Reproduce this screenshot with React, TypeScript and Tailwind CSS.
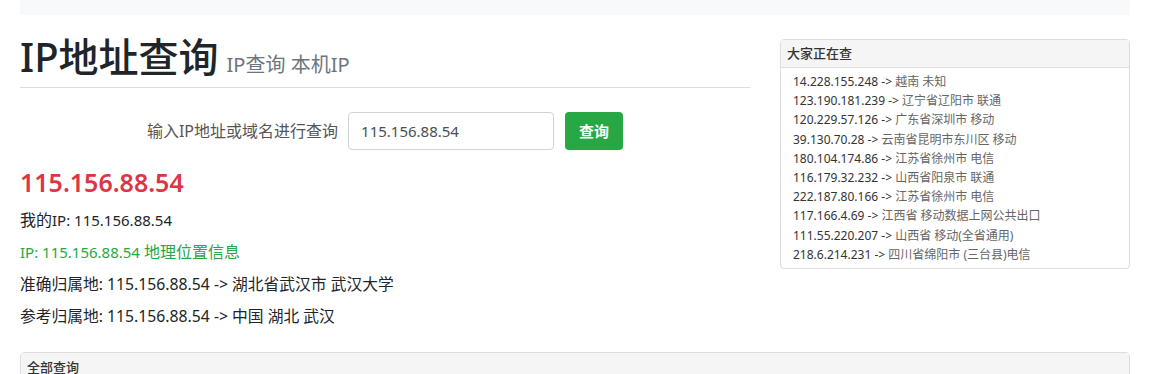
const recent: [string, string][] = [
  ["14.228.155.248", "越南 未知"],
  ["123.190.181.239", "辽宁省辽阳市 联通"],
  ["120.229.57.126", "广东省深圳市 移动"],
  ["39.130.70.28", "云南省昆明市东川区 移动"],
  ["180.104.174.86", "江苏省徐州市 电信"],
  ["116.179.32.232", "山西省阳泉市 联通"],
  ["222.187.80.166", "江苏省徐州市 电信"],
  ["117.166.4.69", "江西省 移动数据上网公共出口"],
  ["111.55.220.207", "山西省 移动(全省通用)"],
  ["218.6.214.231", "四川省绵阳市 (三台县)电信"],
];

const ip = "115.156.88.54";

export default function App() {
  return (
    <div
      className="min-h-screen bg-white text-[#212529]"
      style={{ fontFamily: '"Noto Sans", "Noto Sans CJK SC", sans-serif' }}
    >
      <div className="ml-[20px] w-[1110px]">
        <div className="h-[15px] bg-[#f8f9fa]" />

        <div className="flex gap-[30px] pt-[18px]">
          <div className="w-[730px]">
            <div className="flex items-baseline gap-[8px] border-b border-[#dddddd] pb-[6px]">
              <h1 className="text-[40px] leading-[48px] font-medium text-[#212529]">IP地址查询</h1>
              <span className="text-[20px] text-[#6c757d]">IP查询 本机IP</span>
            </div>

            <div className="mt-[24px] flex items-center justify-center">
              <span className="text-[16px] text-[#555555]">输入IP地址或域名进行查询</span>
              <input
                readOnly
                value={ip}
                className="ml-[10px] h-[38px] w-[206px] rounded-[4px] border border-[#ced4da] px-[12px] text-[15px] text-[#495057] outline-none"
              />
              <button
                type="button"
                className="ml-[11px] h-[38px] w-[58px] rounded-[4px] bg-[#28a745] text-[15px] font-bold text-white"
              >
                查询
              </button>
            </div>

            <div className="mt-[14px] text-[25px] leading-[36px] font-semibold text-[#dc3545]">{ip}</div>

            <div className="mt-[4px] flex flex-col text-[15px] leading-[32px]">
              <p>
                <span className="text-[16px]">我的</span>IP: {ip}
              </p>
              <p className="text-[#28a745]">
                IP: {ip} <span className="text-[16px]">地理位置信息</span>
              </p>
              <p className="text-[15.75px]">准确归属地: {ip} -&gt; 湖北省武汉市 武汉大学</p>
              <p className="text-[15.75px]">参考归属地: {ip} -&gt; 中国 湖北 武汉</p>
            </div>
          </div>

          <div className="mt-[6px] w-[350px]">
            <div className="rounded-[4px] border border-[#dddddd]">
              <div className="h-[28px] border-b border-[#dddddd] bg-[#f5f5f5] px-[6px] text-[13px] leading-[27px] font-medium text-[#333333]">
                大家正在查
              </div>
              <ul className="px-[12px] py-[4px] text-[12px] leading-[19.2px]">
                {recent.map(([addr, loc]) => (
                  <li key={addr} className="text-[#333333]">
                    {addr} -&gt; <span className="text-[#666666]">{loc}</span>
                  </li>
                ))}
              </ul>
            </div>
          </div>
        </div>

        <div className="mt-[20px] rounded-t-[4px] border border-[#dddddd]">
          <div className="h-[28px] bg-[#f5f5f5] px-[6px] text-[13px] leading-[28px] font-medium text-[#333333]">
            全部查询
          </div>
        </div>
      </div>
    </div>
  );
}
